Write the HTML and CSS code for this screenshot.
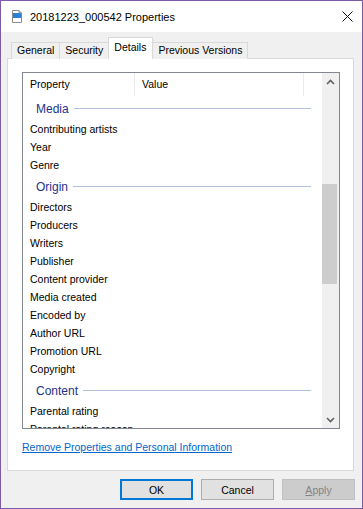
FILE: index.html
```html
<!DOCTYPE html>
<html>
<head>
<meta charset="utf-8">
<link rel="stylesheet" href="styles.css">
</head>
<body>
<div class="window">
  <div class="titlebar">
    <svg class="file-icon" width="10" height="13" viewBox="0 0 10 13">
      <path d="M0.5 0.5 H7 L9.5 3 V12.5 H0.5 Z" fill="#fff" stroke="#8a8a8a"/>
      <rect x="1" y="3" width="8" height="5" fill="#2b7fd4"/>
      <path d="M7 0.5 V3 H9.5" fill="none" stroke="#8a8a8a"/>
    </svg>
    <span class="title">20181223_000542 Properties</span>
    <svg class="close" width="11" height="11" viewBox="0 0 11 11">
      <path d="M0.5 0.5 L10.5 10.5 M10.5 0.5 L0.5 10.5" stroke="#111" stroke-width="1"/>
    </svg>
  </div>
  <div class="tabs">
    <div class="tab">General</div>
    <div class="tab">Security</div>
    <div class="tab active">Details</div>
    <div class="tab">Previous Versions</div>
  </div>
  <div class="panel">
    <div class="listbox">
      <div class="list-main">
        <div class="header">
          <div class="hcol c1">Property</div>
          <div class="hcol c2">Value</div>
          <div class="hcol c3"></div>
        </div>
        <div class="rows">
          <div class="group"><span>Media</span><i></i></div>
          <div class="row">Contributing artists</div>
          <div class="row">Year</div>
          <div class="row">Genre</div>
          <div class="group"><span>Origin</span><i></i></div>
          <div class="row">Directors</div>
          <div class="row">Producers</div>
          <div class="row">Writers</div>
          <div class="row">Publisher</div>
          <div class="row">Content provider</div>
          <div class="row">Media created</div>
          <div class="row">Encoded by</div>
          <div class="row">Author URL</div>
          <div class="row">Promotion URL</div>
          <div class="row">Copyright</div>
          <div class="group"><span>Content</span><i></i></div>
          <div class="row">Parental rating</div>
          <div class="row">Parental rating reason</div>
        </div>
      </div>
      <div class="scrollbar">
        <div class="sb-btn">
          <svg width="9" height="6" viewBox="0 0 9 6"><path d="M1 5 L4.5 1.5 L8 5" fill="none" stroke="#606060" stroke-width="1.6"/></svg>
        </div>
        <div class="sb-track">
          <div class="sb-thumb"></div>
        </div>
        <div class="sb-btn">
          <svg width="9" height="6" viewBox="0 0 9 6"><path d="M1 1 L4.5 4.5 L8 1" fill="none" stroke="#606060" stroke-width="1.6"/></svg>
        </div>
      </div>
    </div>
    <a class="link" href="#">Remove Properties and Personal Information</a>
  </div>
  <div class="footer">
    <div class="btn default">OK</div>
    <div class="btn">Cancel</div>
    <div class="btn disabled"><u>A</u>pply</div>
  </div>
</div>
</body>
</html>
```
FILE: styles.css
```css
html, body {
  margin: 0;
  padding: 0;
  background: #f0f0f0;
}
body {
  font-family: "Liberation Sans", Arial, sans-serif;
  font-size: 10.5px;
  color: #000;
}
.window {
  width: 363px;
  height: 509px;
  box-sizing: border-box;
  border: 1px solid #7b5aa6;
  background: #f0f0f0;
  display: flex;
  flex-direction: column;
}
.titlebar {
  height: 31px;
  flex: none;
  background: #fff;
  display: flex;
  align-items: center;
  padding-left: 11px;
  padding-right: 9px;
}
.file-icon {
  flex: none;
  margin-top: -1px;
}
.title {
  font-size: 11px;
  margin-left: 8px;
  flex: 1;
  color: #000;
}
.close {
  flex: none;
  margin-top: -1px;
}
.tabs {
  margin-top: 6px;
  height: 21px;
  display: flex;
  align-items: flex-end;
  padding-left: 10px;
  position: relative;
  z-index: 1;
}
.tab {
  height: 16px;
  line-height: 15px;
  box-sizing: content-box;
  padding: 0 5px;
  border: 1px solid #d9d9d9;
  border-bottom: none;
  margin-right: -1px;
  background: #f0f0f0;
  white-space: nowrap;
}
.tab.active {
  height: 21px;
  line-height: 18px;
  background: #fff;
  padding: 0 6px 0 5px;
  position: relative;
  z-index: 2;
}
.panel {
  margin-top: -1px;
  margin-left: 6px;
  width: 347px;
  height: 413px;
  box-sizing: border-box;
  border: 1px solid #d9d9d9;
  background: #fff;
  padding: 13px 0 0 14px;
}
.listbox {
  width: 318px;
  height: 357px;
  box-sizing: border-box;
  border: 1px solid #828790;
  display: flex;
}
.list-main {
  flex: 1;
  display: flex;
  flex-direction: column;
  min-width: 0;
}
.header {
  height: 23px;
  display: flex;
  flex: none;
}
.hcol {
  line-height: 23px;
  padding-left: 7px;
  box-sizing: border-box;
  border-right: 1px solid #ebebeb;
}
.hcol.c1 { width: 112px; }
.hcol.c2 { width: 169px; }
.hcol.c3 { flex: 1; border-right: none; }
.rows {
  flex: 1;
  overflow: hidden;
}
.group {
  height: 24px;
  display: flex;
  align-items: center;
  padding-left: 13px;
  padding-right: 11px;
  color: #1e3287;
  font-size: 12px;
}
.group span {
  margin-top: 1px;
}
.group i {
  flex: 1;
  height: 1px;
  background: #b4c0dc;
  margin-left: 5px;
}
.row {
  height: 18px;
  line-height: 18px;
  padding-left: 7px;
  white-space: nowrap;
}
.scrollbar {
  width: 17px;
  flex: none;
  background: #f0f0f0;
  display: flex;
  flex-direction: column;
}
.sb-btn {
  height: 17px;
  flex: none;
  display: flex;
  align-items: center;
  justify-content: center;
}
.sb-track {
  flex: 1;
  padding-top: 94px;
}
.sb-thumb {
  height: 100px;
  width: 15px;
  margin-left: 0;
  background: #cdcdcd;
}
.link {
  display: block;
  margin-top: 11px;
  line-height: 14px;
  color: #0066cc;
  text-decoration: underline;
  white-space: nowrap;
}
.footer {
  margin-top: 8px;
  display: flex;
  justify-content: flex-end;
  gap: 8px;
  padding-right: 7px;
}
.btn {
  width: 73px;
  height: 21px;
  box-sizing: border-box;
  border: 1px solid #adadad;
  background: #e1e1e1;
  display: flex;
  align-items: center;
  justify-content: center;
}
.btn.default {
  border: 2px solid #0078d7;
}
.btn.disabled {
  background: #cccccc;
  border-color: #bfbfbf;
  color: #838383;
}
```
